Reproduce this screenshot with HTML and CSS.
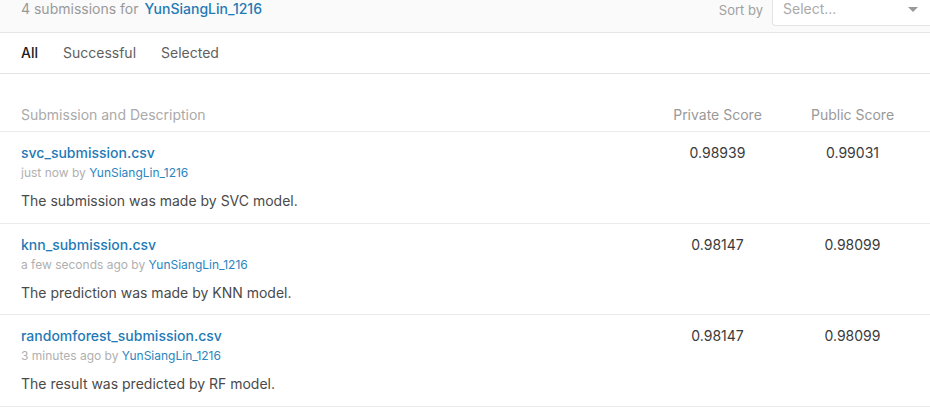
FILE: index.html
```html
<!DOCTYPE html>
<html>
<head>
<meta charset="utf-8">
<link rel="stylesheet" href="styles.css">
</head>
<body>
<div class="topbar">
  <div class="count">4 submissions for <a class="user">YunSiangLin_1216</a></div>
  <div class="sort">
    <span class="sort-label">Sort by</span>
    <div class="select">
      <span class="placeholder">Select...</span>
      <span class="caret"></span>
    </div>
  </div>
</div>
<div class="tabs">
  <span class="tab active">All</span>
  <span class="tab">Successful</span>
  <span class="tab">Selected</span>
</div>
<div class="table">
  <div class="row head">
    <div class="desc-col">Submission and Description</div>
    <div class="score">Private Score</div>
    <div class="score">Public Score</div>
  </div>
  <div class="row">
    <div class="desc-col">
      <a class="file">svc_submission.csv</a>
      <div class="meta">just now by <a class="by">YunSiangLin_1216</a></div>
      <div class="desc">The submission was made by SVC model.</div>
    </div>
    <div class="score val">0.98939</div>
    <div class="score val">0.99031</div>
  </div>
  <div class="row">
    <div class="desc-col">
      <a class="file">knn_submission.csv</a>
      <div class="meta">a few seconds ago by <a class="by">YunSiangLin_1216</a></div>
      <div class="desc">The prediction was made by KNN model.</div>
    </div>
    <div class="score val">0.98147</div>
    <div class="score val">0.98099</div>
  </div>
  <div class="row">
    <div class="desc-col">
      <a class="file">randomforest_submission.csv</a>
      <div class="meta">3 minutes ago by <a class="by">YunSiangLin_1216</a></div>
      <div class="desc">The result was predicted by RF model.</div>
    </div>
    <div class="score val">0.98147</div>
    <div class="score val">0.98099</div>
  </div>
</div>
</body>
</html>
```
FILE: styles.css
```css
* { box-sizing: border-box; }
html, body { margin: 0; padding: 0; background: #fff; }
body {
  font-family: Inter, "Noto Sans", sans-serif;
  font-size: 14px;
  color: #333;
  overflow: hidden;
}
a { text-decoration: none; }

.topbar {
  height: 33px;
  background: #fafafa;
  border-bottom: 1px solid #e6e6e6;
  display: flex;
  justify-content: space-between;
  align-items: flex-start;
  padding-left: 21px;
}
.count {
  color: #999;
  line-height: 18px;
  font-size: 14px;
}
.count .user {
  color: #1f7ab6;
  font-weight: 500;
  margin-left: 2px;
}
.sort {
  display: flex;
  align-items: flex-start;
  gap: 9px;
}
.sort-label {
  font-size: 13px;
  color: #a0a0a0;
  line-height: 18px;
  margin-top: 1px;
}
.select {
  width: 158px;
  height: 27px;
  background: #fff;
  border: 1px solid #e3e3e3;
  border-top: none;
  border-right: none;
  border-radius: 0 0 0 4px;
  display: flex;
  align-items: flex-start;
  justify-content: space-between;
  padding: 0 12px 0 10px;
  margin-top: -1px;
}
.placeholder {
  color: #aaa;
  line-height: 20px;
  font-size: 14px;
}
.caret {
  margin-top: 8px;
  width: 0; height: 0;
  border-left: 5px solid transparent;
  border-right: 5px solid transparent;
  border-top: 5px solid #999;
}

.tabs {
  height: 41px;
  border-bottom: 1px solid #e3e3e3;
  display: flex;
  align-items: center;
  gap: 25px;
  padding-left: 21px;
}
.tab {
  color: #5f5f5f;
  font-size: 14px;
  line-height: 18px;
}
.tab.active { color: #202020; font-weight: 500; }

.table { margin-top: 25px; }
.row {
  display: grid;
  grid-template-columns: 1fr 135px 135px;
  border-bottom: 1px solid #ebebeb;
  padding: 11px 10px 12px 21px;
}
.row:nth-child(3) { padding-bottom: 11px; }
.row.head {
  padding: 7px 10px 7px 21px;
  color: #aaa;
  line-height: 18px;
}
.row.head .score { color: #999; line-height: 18px; }
.file {
  display: block;
  color: #1f7ab6;
  font-weight: 500;
  line-height: 20px;
}
.meta {
  margin-top: 2px;
  font-size: 12px;
  line-height: 16px;
  color: #b0b0b0;
}
.meta .by { color: #2a85c0; }
.desc {
  margin-top: 10px;
  line-height: 20px;
  color: #4a4a4a;
}
.score { text-align: center; line-height: 20px; }
.score.val { color: #3a3a3a; }
```
